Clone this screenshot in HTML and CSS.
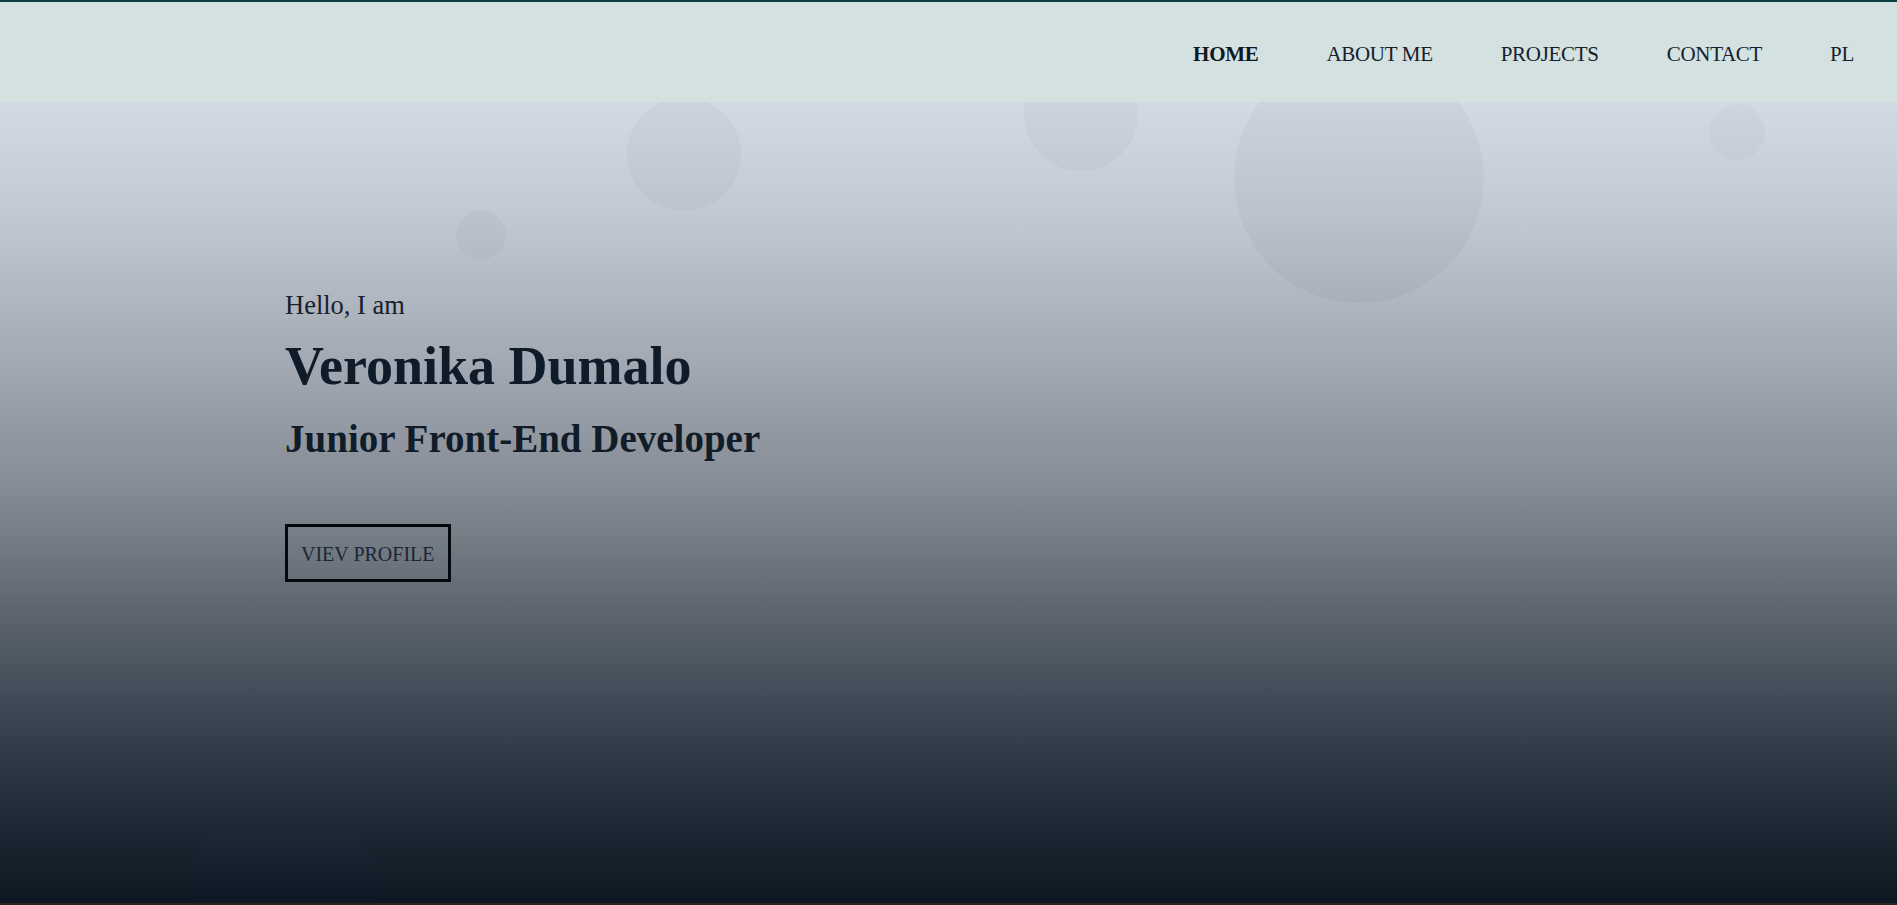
FILE: index.html
```html
<!DOCTYPE html>
<html lang="en">
<head>
<meta charset="utf-8">
<title>Veronika Dumalo</title>
<link rel="stylesheet" href="styles.css">
</head>
<body>
<header class="topbar">
  <nav class="nav">
    <a class="nav-link active" href="#">HOME</a>
    <a class="nav-link" href="#">ABOUT ME</a>
    <a class="nav-link" href="#">PROJECTS</a>
    <a class="nav-link" href="#">CONTACT</a>
    <a class="nav-link" href="#">PL</a>
  </nav>
</header>
<main class="hero">
  <span class="bubble b1"></span>
  <span class="bubble b2"></span>
  <span class="bubble b3"></span>
  <span class="bubble b4"></span>
  <span class="bubble b5"></span>
  <span class="bubble b6"></span>
  <div class="intro">
    <p class="hello">Hello, I am</p>
    <h1 class="name">Veronika Dumalo</h1>
    <h2 class="role">Junior Front-End Developer</h2>
    <a class="btn" href="#">VIEV PROFILE</a>
  </div>
</main>
<div class="next-edge"></div>
</body>
</html>
```

FILE: styles.css
```css
* { box-sizing: border-box; }
html, body { margin: 0; padding: 0; }
body {
  font-family: "Liberation Serif", "Times New Roman", serif;
  color: #111c28;
  background: #0c1721;
  overflow: hidden;
}

.topbar {
  position: relative;
  z-index: 2;
  height: 102px;
  border-top: 2px solid #0a3c40;
  background: #d3e1e0;
}

.nav {
  display: flex;
  justify-content: flex-end;
  align-items: flex-start;
  gap: 68px;
  padding: 42px 43px 0 0;
}

.nav-link {
  font-size: 21px;
  line-height: 1;
  letter-spacing: -0.3px;
  color: #15202c;
  text-decoration: none;
}
.nav-link.active { font-weight: bold; color: #0d1824; }

.hero {
  position: relative;
  overflow: hidden;
  height: 801px;
  background: linear-gradient(to bottom,
    #d4dae3 0%,
    #c3c9d2 14%,
    #a4aab4 32%,
    #858c96 48%,
    #5e6771 63%,
    #3d4753 76%,
    #26313e 86%,
    #0c1721 100%);
}

.bubble {
  position: absolute;
  border-radius: 50%;
  background: rgba(70, 90, 115, 0.05);
}
.b1 { left: 627px; top: -5px; width: 114px; height: 114px; }
.b2 { left: 1024px; top: -45px; width: 114px; height: 114px; }
.b3 {
  left: 1234px; top: -49px; width: 250px; height: 250px;
  background: linear-gradient(to bottom, rgba(80, 100, 120, 0.05), rgba(70, 100, 110, 0.08));
}
.b4 { left: 456px; top: 108px; width: 50px; height: 50px; }
.b5 { left: 1709px; top: 2px; width: 56px; height: 56px; background: rgba(70, 90, 115, 0.04); }
.b6 {
  left: 189px; top: 696px; width: 188px; height: 188px;
  background: rgba(30, 60, 90, 0.05);
}

.intro {
  position: relative;
  z-index: 1;
  display: flex;
  flex-direction: column;
  align-items: flex-start;
  padding: 190px 0 0 285px;
}

.hello {
  margin: 0;
  font-size: 26.5px;
  line-height: 1;
  color: #16212d;
}

.name {
  margin: 20px 0 0;
  font-size: 54px;
  line-height: 1;
  font-weight: bold;
  color: #0f1b28;
}

.role {
  margin: 26px 0 0;
  font-size: 39px;
  line-height: 1;
  font-weight: bold;
  color: #111c29;
}

.btn {
  margin-top: 66px;
  display: inline-block;
  border: 3px solid #05080c;
  padding: 17px 13px 15px;
  font-size: 20px;
  line-height: 20px;
  color: #1b2533;
  text-decoration: none;
}

.next-edge {
  height: 2px;
  background: #2b2522;
}
```
